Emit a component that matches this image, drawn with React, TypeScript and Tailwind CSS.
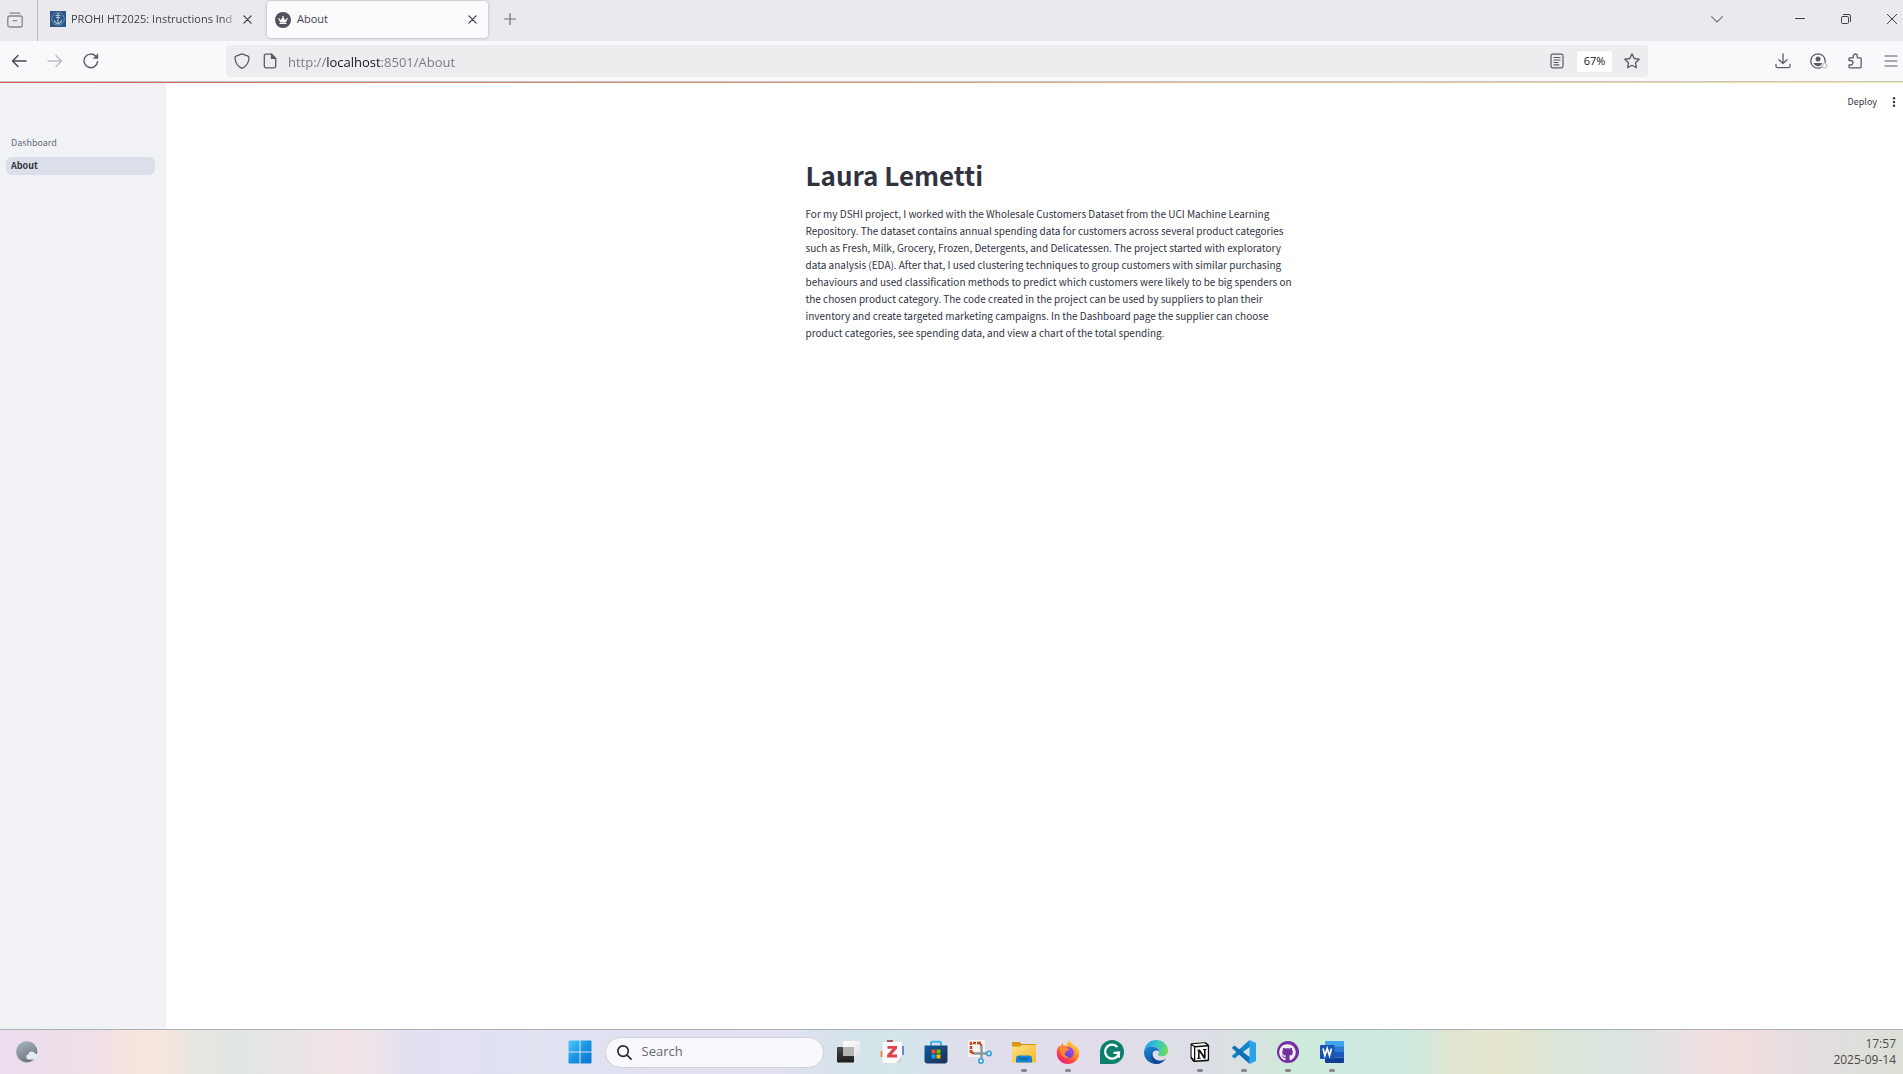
import React from "react";
import { FaCrown, FaGithub } from "react-icons/fa";

const SOURCE = "font-['Noto_Sans_CJK_SC','Open_Sans',sans-serif]";
const UI = "font-['Open_Sans','Noto_Sans',sans-serif]";

type IconProps = { children: React.ReactNode; className?: string; box?: string; sw?: number };

function Line({ children, className = "size-4 text-[#5b5b66]", box = "0 0 16 16", sw = 1.3 }: IconProps) {
  return (
    <svg viewBox={box} className={className} fill="none" stroke="currentColor" strokeWidth={sw} strokeLinecap="round" strokeLinejoin="round" aria-hidden="true">
      {children}
    </svg>
  );
}

function IconButton({ label, children, className = "size-8" }: { label: string; children: React.ReactNode; className?: string }) {
  return (
    <button type="button" aria-label={label} className={`flex shrink-0 items-center justify-center ${className}`}>
      {children}
    </button>
  );
}

function Cross({ className }: { className: string }) {
  return (
    <Line className={className} box="0 0 10 10" sw={1.4}>
      <path d="M1 1l8 8M9 1L1 9" />
    </Line>
  );
}

function TabStrip() {
  return (
    <div className="flex h-[41px] items-stretch bg-[#eaeaee]">
      <div className="flex w-[38px] items-center border-r border-[#bcbcc2] pb-[2px]">
        <IconButton label="Firefox View" className="ml-[7px] size-4">
          <Line className="size-4 text-[#85858c]" sw={1.3}>
            <path d="M3 1.1h10" />
            <rect x=".8" y="4" width="14.4" height="11" rx="2" />
            <path d="M6.2 8.6h3.6" />
          </Line>
        </IconButton>
      </div>
      <div className="flex w-[229px] items-center pl-3 pb-[3px]">
        <svg viewBox="0 0 16 16" className="size-4 shrink-0" aria-hidden="true">
          <rect width="16" height="16" fill="#2c5688" />
          <circle cx="8" cy="8" r="6.2" fill="none" stroke="#7fa3bd" strokeWidth="1" strokeDasharray="2 .6" />
          <path d="M8 2v11M5.6 4.5h4.8M4.2 9c.5 2.5 2 3.6 3.8 4 1.800-.4 3.300-1.500 3.800-4M6 6.500l4 0" fill="none" stroke="#a9c3d3" strokeWidth="1.100" />
        </svg>
        <span className={`ml-[5px] w-[168px] whitespace-nowrap text-[11px] text-[#3f3f48] [mask-image:linear-gradient(90deg,#000_90%,transparent)] ${UI}`}>
          PROHI HT2025: Instructions Ind
        </span>
        <IconButton label="Close tab" className="size-4">
          <Cross className="size-[9px] text-[#3f3f48]" />
        </IconButton>
      </div>
      <div className="mb-[3px] mt-px flex w-[221px] items-center rounded bg-[#fbfbfd] pl-2 pr-2 shadow-[0_0_3px_rgba(0,0,0,0.3)]">
        <span className="flex size-4 items-center justify-center rounded-full bg-[#52525c]">
          <FaCrown className="size-[10px] text-[#fbfbfd]" aria-hidden="true" />
        </span>
        <span className={`ml-[6px] flex-1 text-[11px] text-[#3f3f48] ${UI}`}>About</span>
        <IconButton label="Close tab" className="size-4">
          <Cross className="size-[9px] text-[#3f3f48]" />
        </IconButton>
      </div>
      <div className="flex flex-1 items-center pb-[3px] pl-[6px]">
        <IconButton label="New tab" className="size-8">
          <Line className="size-3 text-[#6b6b73]" box="0 0 12 12" sw={1.2}>
            <path d="M6 .6v10.800M.6 6h10.800" />
          </Line>
        </IconButton>
        <div className="ml-auto flex items-center">
          <IconButton label="List all tabs" className="mr-[44px] size-8">
            <Line className="size-3 text-[#75757c]" box="0 0 12 12" sw={1.1}>
              <path d="M.6 3.600L6 9l5.400-5.400" />
            </Line>
          </IconButton>
          <IconButton label="Minimize" className="h-8 w-[46px]">
            <Line className="size-[10px] text-[#3f3f48]" box="0 0 10 10" sw={1}>
              <path d="M.5 4.500h9" />
            </Line>
          </IconButton>
          <IconButton label="Restore" className="h-8 w-[46px]">
            <Line className="size-[10px] text-[#3f3f48]" box="0 0 10 10" sw={1}>
              <rect x=".5" y="2.500" width="7" height="7" rx="1" />
              <path d="M2.500.5H8A1.500 1.500 0 0 1 9.500 2v5.500" />
            </Line>
          </IconButton>
          <IconButton label="Close window" className="h-8 w-[34px] pl-3">
            <Line className="size-[10px] text-[#3f3f48]" box="0 0 10 10" sw={1}>
              <path d="M.3.3l9.400 9.400M9.700.3L.3 9.700" />
            </Line>
          </IconButton>
        </div>
      </div>
    </div>
  );
}

function Toolbar() {
  return (
    <div className="flex h-10 items-center bg-[#f9f9fb]">
      <div className="flex w-[226px] items-center gap-1 pl-[3px]">
        <IconButton label="Back">
          <Line className="size-4 text-[#4a4a54]" sw={1.5}>
            <path d="M15 8H1.500M7 2.500L1.500 8 7 13.500" />
          </Line>
        </IconButton>
        <IconButton label="Forward">
          <Line className="size-4 text-[#bdbdc2]" sw={1.4}>
            <path d="M1 8h13.500M9 2.500L14.500 8 9 13.500" />
          </Line>
        </IconButton>
        <IconButton label="Reload">
          <Line className="size-4 text-[#5b5b66]" sw={1.4}>
            <path d="M14.600 8.600A6.800 6.800 0 1 1 12.800 3.200" />
            <path d="M15 .8v4.700h-4.700z" fill="currentColor" strokeWidth=".4" />
          </Line>
        </IconButton>
      </div>
      <div className="flex h-8 flex-1 items-center rounded bg-[#ededf0] pl-[2px]">
        <IconButton label="Site protections" className="size-7">
          <Line>
            <path d="M8 .8l6 2.300c.8.3 1 .7 1 1.400-.1 4.500-2 8.600-7 10.900C3 13.100 1.100 9 1 4.500c0-.7.2-1.100 1-1.400z" />
          </Line>
        </IconButton>
        <IconButton label="Site information" className="size-7">
          <Line>
            <path d="M9.500 1.200H4A1.700 1.700 0 0 0 2.300 3v10A1.700 1.700 0 0 0 4 14.800h8a1.700 1.700 0 0 0 1.700-1.800V5.400z" />
            <path d="M9.500 1.200v4.200h4.200z" fill="currentColor" />
          </Line>
        </IconButton>
        <input
          aria-label="Address"
          defaultValue="http://localhost:8501/About"
          className={`ml-1 h-8 min-w-0 flex-1 bg-[linear-gradient(90deg,#77777d_38px,#15141a_38px,#15141a_93px,#77777d_93px)] bg-clip-text pt-px text-[13px] text-transparent outline-none ${UI}`}
        />
        <IconButton label="Reader view" className="mr-1 size-8">
          <Line className="size-4 text-[#5b5b66]" sw={1.2}>
            <rect x="2" y="1.200" width="12" height="13.600" rx="1.500" />
            <path d="M5 4.500h6M5 7h6M5 9.500h4M5 11.800h5" />
          </Line>
        </IconButton>
        <button type="button" className={`h-[21px] w-[35px] rounded-[3px] bg-white text-[11px] text-[#15141a] ${UI}`}>67%</button>
        <IconButton label="Bookmark" className="ml-1 size-8">
          <Line>
            <path d="M8 .9l2.200 4.600 5 .7-3.700 3.500.9 5L8 12.300l-4.400 2.400.9-5L.8 6.200l5-.7z" />
          </Line>
        </IconButton>
      </div>
      <div className="flex w-[255px] items-center justify-end">
        <IconButton label="Downloads" className="h-8 w-9">
          <Line>
            <path d="M8 .8v9.400M4 6.700l4 3.800 4-3.800M1 11.500v1.700c0 .9.500 1.500 1.500 1.500h11c1 0 1.500-.6 1.500-1.500v-1.700" />
          </Line>
        </IconButton>
        <IconButton label="Account" className="h-8 w-9">
          <svg viewBox="0 0 18 16" className="h-4 w-[18px]" aria-hidden="true">
            <circle cx="8" cy="8" r="7.200" fill="none" stroke="#5b5b66" strokeWidth="1.300" />
            <circle cx="8" cy="6" r="2.500" fill="#5b5b66" />
            <path d="M3.500 10h9c-.6 2-2.300 3.200-4.500 3.200S4.100 12 3.500 10z" fill="#5b5b66" />
            <circle cx="14.700" cy="12.800" r="3.200" fill="#f9f9fb" />
            <circle cx="14.700" cy="12.800" r="2.300" fill="none" stroke="#b1b1b8" />
          </svg>
        </IconButton>
        <IconButton label="Extensions" className="h-8 w-9">
          <Line>
            <path d="M2 7.500V5.600c0-.5.300-.8.8-.8h3.500V3a2 2 0 0 1 4 0v1.800h3c.5 0 .8.300.8.800v8.400c0 .5-.3.800-.8.800H2.800c-.5 0-.8-.3-.8-.8v-2h1.700a2.200 2.200 0 0 0 0-4.500z" />
          </Line>
        </IconButton>
        <IconButton label="Menu" className="mr-[-6px] h-8 w-9">
          <Line className="size-4 text-[#5b5b66]" sw={1.200}>
            <path d="M2 3h12M2 8h12M2 13h12" />
          </Line>
        </IconButton>
      </div>
    </div>
  );
}

function Page() {
  return (
    <div className={`flex flex-1 bg-white text-[#31333f] ${SOURCE}`}>
      <aside className="w-[166px] shrink-0 bg-[#f0f2f6] px-[6px] pt-[51px]">
        <nav className="mr-[5px] flex flex-col gap-[5px] text-[9px] leading-[18px]">
          <a href="#dashboard" className="rounded-md px-[5px] text-[#6a6c76]">Dashboard</a>
          <a href="#about" aria-current="page" className="rounded-md bg-[#dbdfe9] px-[5px] font-bold">About</a>
        </nav>
      </aside>
      <div className="flex-1">
        <header className="flex h-[38px] items-center justify-end pr-1">
          <button type="button" className="mr-[12px] text-[9px]">Deploy</button>
          <IconButton label="Main menu" className="size-[10px]">
            <svg viewBox="0 0 10 10" className="size-[10px]" fill="#31333f" aria-hidden="true">
              <circle cx="5" cy="1.300" r="1.200" />
              <circle cx="5" cy="5" r="1.200" />
              <circle cx="5" cy="8.700" r="1.200" />
            </svg>
          </IconButton>
        </header>
        <main className="mx-auto w-[526px] pl-[34px] pt-9">
          <h1 className="text-[26px] font-bold leading-9">Laura Lemetti</h1>
          <p className="mt-3 text-[10px] leading-[17px]">
            For my DSHI project, I worked with the Wholesale Customers Dataset from the UCI Machine Learning
            Repository. The dataset contains annual spending data for customers across several product categories
            such as Fresh, Milk, Grocery, Frozen, Detergents, and Delicatessen. The project started with exploratory
            data analysis (EDA). After that, I used clustering techniques to group customers with similar purchasing
            behaviours and used classification methods to predict which customers were likely to be big spenders on
            the chosen product category. The code created in the project can be used by suppliers to plan their
            inventory and create targeted marketing campaigns. In the Dashboard page the supplier can choose
            product categories, see spending data, and view a chart of the total spending.
          </p>
        </main>
      </div>
    </div>
  );
}

function Svg({ children }: { children: React.ReactNode }) {
  return <svg viewBox="0 0 24 24" className="size-6" aria-hidden="true">{children}</svg>;
}

const apps: { name: string; running?: boolean; icon: React.ReactNode }[] = [
  {
    name: "Task View",
    icon: (
      <Svg>
        <defs>
          <linearGradient id="tvDark" x1="0" y1="0" x2="0" y2="1"><stop offset="0" stopColor="#4a4a4a" /><stop offset="1" stopColor="#1b1b1b" /></linearGradient>
          <linearGradient id="tvLight" x1="0" y1="0" x2="1" y2="1"><stop offset="0" stopColor="#fff" /><stop offset="1" stopColor="#e2e2e2" /></linearGradient>
        </defs>
        <rect x="7" y="1" width="17" height="15" rx="1" fill="url(#tvLight)" />
        <rect x="1" y="7" width="17" height="15.500" rx="1" fill="url(#tvDark)" />
        <path d="M7 7h11v9H7z" fill="#b4b4b4" />
      </Svg>
    ),
  },
  {
    name: "Zotero",
    icon: (
      <Svg>
        <path d="M7 0h6v4H7z" fill="#b3546b" />
        <path d="M.5 11h4v6h-4z" fill="#ee8653" />
        <path d="M20 6h4v9h-4z" fill="#6b85d3" />
        <path d="M3.500 2H22v14l-6 7H3.500a1 1 0 0 1-1-1V3a1 1 0 0 1 1-1z" fill="#fafafb" />
        <path d="M22 16v6a1 1 0 0 1-1 1h-5z" fill="#d7d7dc" />
        <path d="M7.500 6h9.500v2.600l-5.300 6H17V17.500H7.200v-2.800l5.400-6H7.500z" fill="#e2404b" />
      </Svg>
    ),
  },
  {
    name: "Microsoft Store",
    icon: (
      <Svg>
        <defs><linearGradient id="store" x1="0" y1="0" x2="1" y2="1"><stop offset="0" stopColor="#0f5a9c" /><stop offset="1" stopColor="#1c3052" /></linearGradient></defs>
        <path d="M7 7V3a1.300 1.300 0 0 1 1.300-1.300h7.400A1.300 1.300 0 0 1 17 3v4" fill="none" stroke="#3fb4ee" strokeWidth="2" />
        <path d="M.5 5.500h23v15a3 3 0 0 1-3 3h-17a3 3 0 0 1-3-3z" fill="url(#store)" />
        <path d="M7.500 9.500h4v4h-4z" fill="#f25022" /><path d="M12.500 9.500h4v4h-4z" fill="#7fba00" />
        <path d="M7.500 14.500h4v4h-4z" fill="#00a4ef" /><path d="M12.500 14.500h4v4h-4z" fill="#ffb900" />
      </Svg>
    ),
  },
  {
    name: "Snipping Tool",
    icon: (
      <Svg>
        <rect width="17" height="17" rx="1.500" fill="#f5f2f1" />
        <path d="M3 13V3h10" fill="none" stroke="#c34a22" strokeWidth="2.600" strokeDasharray="3 1" />
        <path d="M3 10v3h3M10.500 3H13v3" fill="none" stroke="#c34a22" strokeWidth="2.400" strokeDasharray="2.500 1" />
        <path d="M13.500 5.500v12.500M6 13.500h13" fill="none" stroke="#8d949b" strokeWidth="2.400" />
        <circle cx="21" cy="13.500" r="2.200" fill="#dff1fb" stroke="#35a1da" strokeWidth="1.600" />
        <circle cx="13" cy="21" r="2.200" fill="#dff1fb" stroke="#35a1da" strokeWidth="1.600" />
      </Svg>
    ),
  },
  {
    name: "File Explorer",
    running: true,
    icon: (
      <Svg>
        <defs><linearGradient id="folder" x1="0" y1="0" x2="1" y2="1"><stop offset="0" stopColor="#ffe08a" /><stop offset="1" stopColor="#f6ba22" /></linearGradient></defs>
        <path d="M0 3a1 1 0 0 1 1-1h6.500l2 2H23a1 1 0 0 1 1 1v6H0z" fill="#d9960f" />
        <path d="M0 6.500h8l2-1.500h14v16.500a1 1 0 0 1-1 1H1a1 1 0 0 1-1-1z" fill="url(#folder)" />
        <path d="M4 22.500v-4a3 3 0 0 1 3-3h10a3 3 0 0 1 3 3v4z" fill="#1682cf" />
        <path d="M8 18.700h8" stroke="#0b5a9b" strokeWidth="1.300" strokeLinecap="round" />
      </Svg>
    ),
  },
  {
    name: "Firefox",
    running: true,
    icon: (
      <Svg>
        <defs>
          <linearGradient id="fx" x1=".9" y1="0" x2=".2" y2="1"><stop offset="0" stopColor="#fff04a" /><stop offset=".4" stopColor="#ff9a24" /><stop offset=".75" stopColor="#ff3f4b" /><stop offset="1" stopColor="#e31587" /></linearGradient>
          <linearGradient id="fxCore" x1=".8" y1="0" x2=".2" y2="1"><stop offset="0" stopColor="#b04bf0" /><stop offset="1" stopColor="#5046cd" /></linearGradient>
        </defs>
        <path d="M14 .2c.6 2.500 2.200 3.600 4 5.200.4.300.7.600.9.900l.3-1.300c2.600 2.500 4 5.600 4 8.600C23.200 19.500 18.300 24 12 24S.8 19.300.8 13c0-3 1-5.500 2.600-7.500l.5 2C5 6 5 4.300 6.700 3l.6 2.200c1.500-.2 2.700.1 3.700.8C11 3.500 12 1.600 14 .2z" fill="url(#fx)" />
        <circle cx="12.300" cy="12.500" r="5.600" fill="url(#fxCore)" />
        <path d="M4 8.500c2.500-2 5.500-1.600 6.500-.6 1.300.2 2.500.5 2.500 1.300 0 1-1.500 1.400-2.500 1.700-1 .4-.8 1.900-2 2.600.6 2.400 2.500 3.500 4.500 3.300-1.500 1.600-4.500 1.400-6.200-.3C5 14.500 4 11.500 4 8.500z" fill="#ff8a30" />
      </Svg>
    ),
  },
  {
    name: "Grammarly",
    icon: (
      <Svg>
        <path d="M12 0a12 12 0 1 1 0 24H0V12A12 12 0 0 1 12 0z" fill="#0c7f6d" />
        <path d="M17.300 7A7 7 0 1 0 19 12.800h-5.500" fill="none" stroke="#fff" strokeWidth="2.300" />
        <path d="M16.500 12.500h2.600v5.200" fill="none" stroke="#fff" strokeWidth="1.800" />
      </Svg>
    ),
  },
  {
    name: "Microsoft Edge",
    icon: (
      <Svg>
        <defs>
          <linearGradient id="edgeTop" x1="0" y1=".3" x2="1" y2=".5"><stop offset="0" stopColor="#2f9fe0" /><stop offset=".5" stopColor="#36c3cf" /><stop offset="1" stopColor="#6bdc5a" /></linearGradient>
          <linearGradient id="edgeLow" x1="0" y1="0" x2=".6" y2="1"><stop offset="0" stopColor="#1b8ad8" /><stop offset="1" stopColor="#0c4f9e" /></linearGradient>
        </defs>
        <path d="M.2 11C.8 4.500 5.800 0 12 0c7 0 12 5 12 10.300 0 4-3 6-6 6-2.700 0-4-1-4-1.900 0-.6 1-1 1-3C15 9 12.500 6.500 9 6.500 5 6.500 1.500 8.700.2 11z" fill="url(#edgeTop)" />
        <path d="M0 12c.5-3.500 4.500-5.700 8.500-5.500 3.500.2 6.500 2.200 6.500 5-1.300-1.500-5-1.700-6.300 1.200-1.200 3 1.300 6.800 5 7.800 3.300.9 6-.3 8-2C19.500 22 16 24 12 24 5 24-.3 18.500 0 12z" fill="url(#edgeLow)" />
        <path d="M8.700 12.700c-1.200 3 1.300 6.800 5 7.800 3.300.9 6-.3 8-2C19.500 22 16 24 12 24c-4.500-2-6-8-3.300-11.300z" fill="#12489a" />
      </Svg>
    ),
  },
  {
    name: "Notion",
    running: true,
    icon: (
      <Svg>
        <path d="M3.500 3.200L16.500 2.200c1 0 1.400.1 2 .6l2 1.600c.4.300.6.600.6 1.200v14c0 1-.4 1.500-1.500 1.600L6.500 22c-.8 0-1.200-.1-1.600-.7L3 18.800c-.4-.5-.5-.9-.5-1.400V4.500c0-.7.3-1.200 1-1.300z" fill="#0d0d0d" />
        <path d="M4 4.200l12.500-.9 2.400 1.800L7 5.900z" fill="#fff" />
        <path d="M3.600 5.200l2.400 1.800v12.500l-2.400-2.800z" fill="#fff" />
        <path d="M7.300 7.400l12.500-.8v13l-12.500.8z" fill="#fff" />
        <path d="M9 9.800l3-.2 4 6V10.200l-1-.3v-.8l3.600-.2v.8l-1 .4v8.500l-1.700.2-4.300-6.500v5.400l1.200.3v.7l-3.700.2v-.8l1-.4v-7.200L9 10.500z" fill="#0d0d0d" />
      </Svg>
    ),
  },
  {
    name: "Visual Studio Code",
    running: true,
    icon: (
      <Svg>
        <path d="M17.500 0L.4 15.500a.8.800 0 0 0 0 1.200l1.500 1.400c.3.300.8.300 1.100 0L18 6.800z" fill="#1483c9" />
        <path d="M17.500 24L.4 8.500a.8.800 0 0 1 0-1.200l1.500-1.400c.3-.3.8-.3 1.100 0L18 17.200z" fill="#0f71b5" />
        <path d="M17.500 0L24 3v18l-6.500 3z" fill="#2ba2e8" />
      </Svg>
    ),
  },
  {
    name: "GitHub Desktop",
    running: true,
    icon: (
      <span className="flex size-[22px] items-center justify-center rounded-full bg-[#7330a0]">
        <FaGithub className="size-[17px] text-[#f6effa]" aria-hidden="true" />
      </span>
    ),
  },
  {
    name: "Word",
    running: true,
    icon: (
      <Svg>
        <path d="M6 1h17a1 1 0 0 1 1 1v5H5V2a1 1 0 0 1 1-1z" fill="#41a5ee" />
        <path d="M5 6.500h19V12H5z" fill="#2b7cd3" />
        <path d="M5 12h19v5.500H5z" fill="#185abd" />
        <path d="M5 17.500h19V22a1 1 0 0 1-1 1H6a1 1 0 0 1-1-1z" fill="#103f91" />
        <rect y="5" width="14.500" height="14" rx="1" fill="#1954b3" />
        <path d="M3 8.500l1.900 7 2.300-7 2.300 7 2-7" fill="none" stroke="#fff" strokeWidth="1.700" />
      </Svg>
    ),
  },
];

function Taskbar() {
  return (
    <footer className="grid h-[45px] grid-cols-[1fr_auto_1fr] items-center border-t border-[#abb0b2] bg-[linear-gradient(90deg,#ebdcee_0%,#efdfe6_5%,#f8e4df_7%,#f7e6dd_8.5%,#e6e6e2_10.5%,#dfe6e2_12.5%,#eae4e8_15.5%,#f3e5e6_18%,#ece4ea_20%,#e1e0f0_21.5%,#e0e2f0_28%,#e2e1f1_41%,#d5e3ea_44.5%,#d3e6ea_47%,#dfdeec_51%,#e2dcea_58%,#dae0e4_65%,#ceead9_68%,#cdeae2_72%,#d0e9dc_74.5%,#e2e5cf_76.5%,#e5e5cc_79%,#dce6d8_81.5%,#d9e5de_84.5%,#e2e1e4_87%,#efdfe0_89.5%,#f0dedd_91.5%,#e6dde0_94.5%,#dfdfdb_97.5%,#dcdfd6_100%)]">
      <IconButton label="Weather" className="ml-4 h-[22px] w-[22px]">
        <svg viewBox="0 0 22 22" className="size-[22px]" aria-hidden="true">
          <defs><linearGradient id="moon" x1="0" y1="0" x2=".5" y2="1"><stop offset="0" stopColor="#a9b8c2" /><stop offset="1" stopColor="#6f777e" /></linearGradient></defs>
          <circle cx="10.800" cy="10.800" r="10.600" fill="url(#moon)" />
          <path d="M12.500 18.500a2.700 2.700 0 0 1-.2-5.300 3.700 3.700 0 0 1 6.800-.8 3.100 3.100 0 0 1 .4 6.100z" fill="#e6ebf1" />
        </svg>
      </IconButton>
      <div className="flex items-center pl-[18px]">
        <IconButton label="Start" className="mr-[13px] size-6">
          <svg viewBox="0 0 24 24" className="size-6" aria-hidden="true">
            <defs><linearGradient id="win" gradientUnits="userSpaceOnUse" x1="0" y1="0" x2="24" y2="24"><stop offset="0" stopColor="#53cdf8" /><stop offset=".5" stopColor="#1a94e2" /><stop offset="1" stopColor="#0a72cf" /></linearGradient></defs>
            <path d="M1.500.5h10v11h-11v-10a1 1 0 0 1 1-1zM12.500.5h10a1 1 0 0 1 1 1v10h-11zM.5 12.500h11v11h-10a1 1 0 0 1-1-1zM12.500 12.500h11v10a1 1 0 0 1-1 1h-10z" fill="url(#win)" />
          </svg>
        </IconButton>
        <label className="mr-[2px] flex h-[31px] w-[219px] items-center rounded-full border border-[#d0d0dc] bg-[#f8f8fd] pl-[11px]">
          <Line className="size-[15px] text-[#2b2b30]" sw={1.8}>
            <circle cx="6.500" cy="6.500" r="5.600" />
            <path d="M10.700 10.700l4.300 4.300" />
          </Line>
          <input aria-label="Search" placeholder="Search" className={`ml-[10px] w-40 bg-transparent text-[13px] outline-none placeholder:text-[#67676e] ${UI}`} />
        </label>
        {apps.map((app) => (
          <button key={app.name} type="button" aria-label={app.name} className="relative flex h-11 w-11 items-center justify-center">
            {app.icon}
            {app.running && <span className="absolute bottom-[2px] left-[19px] h-[3px] w-[6px] rounded-full bg-[#85858b]" />}
          </button>
        ))}
      </div>
      <div className={`pr-[7px] text-right text-[12px] leading-4 text-[#4c4c4c] ${UI}`}>
        <div>17:57</div>
        <div>2025-09-14</div>
      </div>
    </footer>
  );
}

export default function App() {
  return (
    <div className="flex min-h-screen flex-col">
      <TabStrip />
      <Toolbar />
      <div className="h-[2px] border-t border-[#c9c4c4] bg-[linear-gradient(90deg,#cb605c,#f0eda6)]" />
      <Page />
      <Taskbar />
    </div>
  );
}
